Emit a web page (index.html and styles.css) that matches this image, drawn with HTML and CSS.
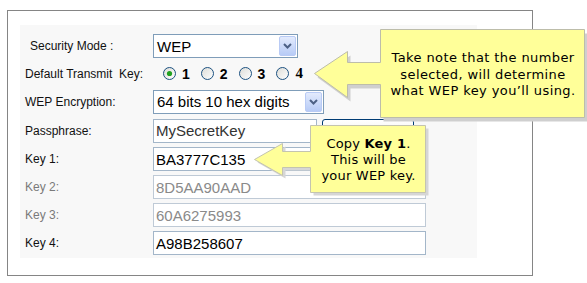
FILE: index.html
```html
<!DOCTYPE html>
<html>
<head>
<meta charset="utf-8">
<link rel="stylesheet" href="styles.css">
</head>
<body>
<div class="frame">
  <div class="panel">
    <div class="label label-first">Security Mode :</div>
    <div class="ctl">
      <div class="select select-mode"><span class="sel-text">WEP</span><span class="sel-btn"><svg width="9" height="6" viewBox="0 0 9 6"><path d="M1 1 L4.5 4.5 L8 1" fill="none" stroke="#4d6185" stroke-width="2"/></svg></span></div>
    </div>

    <div class="label">Default Transmit&nbsp; Key:</div>
    <div class="ctl radios">
      <span class="opt"><svg class="radio" width="13" height="13" viewBox="0 0 13 13"><defs><linearGradient id="rg" x1="0" y1="0" x2="1" y2="1"><stop offset="0" stop-color="#dcdcd7"/><stop offset="1" stop-color="#ffffff"/></linearGradient></defs><circle cx="6.5" cy="6.5" r="6" fill="url(#rg)" stroke="#1c5180"/><circle cx="6.5" cy="6.5" r="2.6" fill="#21a121"/></svg><b>1</b></span>
      <span class="opt"><svg class="radio" width="13" height="13" viewBox="0 0 13 13"><circle cx="6.5" cy="6.5" r="6" fill="url(#rg)" stroke="#1c5180"/></svg><b>2</b></span>
      <span class="opt"><svg class="radio" width="13" height="13" viewBox="0 0 13 13"><circle cx="6.5" cy="6.5" r="6" fill="url(#rg)" stroke="#1c5180"/></svg><b>3</b></span>
      <span class="opt"><svg class="radio" width="13" height="13" viewBox="0 0 13 13"><circle cx="6.5" cy="6.5" r="6" fill="url(#rg)" stroke="#1c5180"/></svg><b class="serif">4</b></span>
    </div>

    <div class="label">WEP Encryption:</div>
    <div class="ctl">
      <div class="select select-enc"><span class="sel-text">64 bits 10 hex digits</span><span class="sel-btn"><svg width="9" height="6" viewBox="0 0 9 6"><path d="M1 1 L4.5 4.5 L8 1" fill="none" stroke="#4d6185" stroke-width="2"/></svg></span></div>
    </div>

    <div class="label">Passphrase:</div>
    <div class="ctl pass-row">
      <div class="input input-pass">MySecretKey</div>
      <div class="btn">Generate</div>
    </div>

    <div class="label">Key 1:</div>
    <div class="ctl"><div class="input input-key">BA3777C135</div></div>

    <div class="label label-dis">Key 2:</div>
    <div class="ctl"><div class="input input-key input-dis">8D5AA90AAD</div></div>

    <div class="label label-dis">Key 3:</div>
    <div class="ctl"><div class="input input-key input-dis">60A6275993</div></div>

    <div class="label">Key 4:</div>
    <div class="ctl"><div class="input input-key">A98B258607</div></div>
  </div>
</div>

<svg class="callouts" width="587" height="283" viewBox="0 0 587 283">
  <path transform="translate(3,4)" d="M380.5,29.5 H584.5 V117.5 H380.5 V84.5 H347.5 V97.5 L314.5,73.5 L347.5,51.5 V62.5 H380.5 Z" fill="#cfcfcf"/>
  <path d="M380.5,29.5 H584.5 V117.5 H380.5 V84.5 H347.5 V97.5 L314.5,73.5 L347.5,51.5 V62.5 H380.5 Z" fill="#ffff99" stroke="#bdbdaa"/>
  <path transform="translate(3,3)" d="M310.5,125.5 H425.5 V192.5 H310.5 V167.5 H282.5 V175.5 L254.5,159.5 L282.5,143.5 V151.5 H310.5 Z" fill="#d6d6d6"/>
  <path d="M310.5,125.5 H425.5 V192.5 H310.5 V167.5 H282.5 V175.5 L254.5,159.5 L282.5,143.5 V151.5 H310.5 Z" fill="#ffff99" stroke="#c4c4b0"/>
</svg>
<div class="note note-1"><span>Take note that the number<br>selected, will determine<br>what WEP key you’ll using.</span></div>
<div class="note note-2"><span>Copy <b>Key 1</b>.<br>This will be<br>your WEP key.</span></div>
</body>
</html>
```

FILE: styles.css
```css
html, body {
  margin: 0;
  padding: 0;
  background: #ffffff;
}
body {
  position: relative;
  width: 587px;
  height: 283px;
  overflow: hidden;
  font-family: "Liberation Sans", Arial, sans-serif;
  color: #000;
}
.frame {
  margin: 10px 0 0 7px;
  width: 524px;
  height: 264px;
  border: 1px solid #858585;
}
.panel {
  margin: 14px 0 0 12px;
  width: 457px;
  height: 233px;
  box-sizing: border-box;
  padding-top: 7px;
  background: #f8f8f8;
  display: grid;
  grid-template-columns: 133px 1fr;
  grid-template-rows: 28px 27px 29px 29px 28px 28px 28px 28px;
}
.label {
  font-size: 12px;
  padding-left: 5px;
  display: flex;
  align-items: center;
  color: #111;
}
.label-first {
  padding-left: 10px;
}
.label-dis {
  color: #7a7a7a;
}
.ctl {
  display: flex;
  align-items: center;
}
.select {
  box-sizing: border-box;
  height: 24px;
  border: 1px solid #7f9db9;
  background: #fff;
  display: flex;
  align-items: center;
  justify-content: space-between;
  padding-left: 3px;
  padding-right: 1px;
}
.select-mode { width: 145px; }
.select-enc { width: 171px; }
.sel-text {
  font-size: 15px;
}
.sel-btn {
  width: 17px;
  height: 20px;
  box-sizing: border-box;
  border: 1px solid #b9cbf5;
  border-radius: 2px;
  background: linear-gradient(#e3ebfd, #b7cbf6);
  display: flex;
  align-items: center;
  justify-content: center;
}
.radios {
  padding-left: 10px;
  gap: 11px;
}
.opt {
  display: flex;
  align-items: center;
  gap: 6px;
  font-size: 14px;
}
.radio {
  display: block;
}
.serif {
  font-family: "Liberation Serif", "Times New Roman", serif;
  font-size: 15px;
}
.input {
  box-sizing: border-box;
  height: 24px;
  border: 1px solid #a3b6c9;
  background: #fff;
  font-size: 15px;
  padding-left: 2px;
  display: flex;
  align-items: center;
}
.input-pass { width: 164px; color: #333; }
.input-key { width: 273px; }
.input-dis { color: #8a8a8a; border-color: #bfcad6; }
.pass-row { gap: 5px; }
.btn {
  box-sizing: border-box;
  width: 92px;
  height: 24px;
  border: 1px solid #003c74;
  border-radius: 3px;
  background: linear-gradient(#ffffff, #ecebe6);
  font-size: 12px;
  display: flex;
  align-items: center;
  justify-content: center;
}
.callouts {
  position: absolute;
  left: 0;
  top: 0;
  pointer-events: none;
}
.note {
  position: absolute;
  display: flex;
  align-items: center;
  justify-content: center;
  text-align: center;
  font-family: "DejaVu Sans", Verdana, sans-serif;
  font-size: 13px;
  letter-spacing: 0.4px;
  line-height: 16.5px;
  color: #000;
}
.note-1 {
  left: 381px;
  top: 31px;
  width: 204px;
  height: 88px;
}
.note-2 {
  left: 311px;
  top: 126px;
  width: 115px;
  height: 67px;
  line-height: 16px;
  letter-spacing: 0.2px;
}
```
